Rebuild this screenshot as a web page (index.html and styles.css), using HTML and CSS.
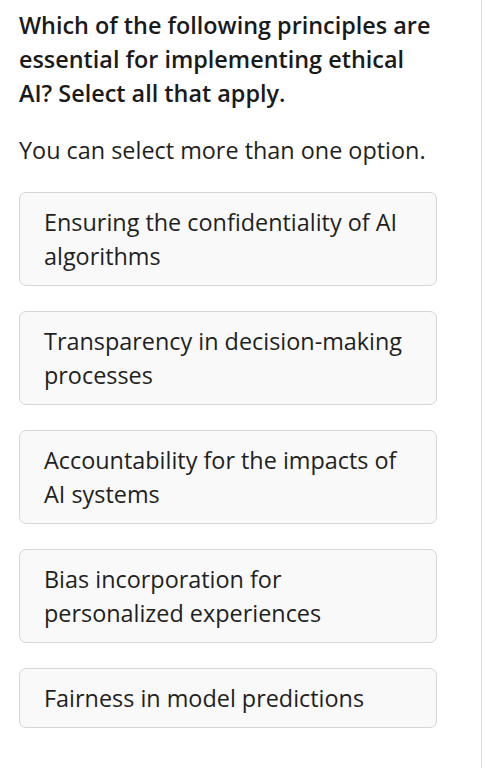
FILE: index.html
```html
<!DOCTYPE html>
<html lang="en">
<head>
    <meta charset="UTF-8">
    <meta name="viewport" content="width=device-width, initial-scale=1.0">
    <title>Ethical AI Quiz</title>
    <link rel="stylesheet" href="styles.css">
</head>
<body>
    <div class="page">
        <div class="question">
            <h1>Which of the following principles are essential for implementing ethical AI? Select all that apply.</h1>
            <p class="hint">You can select more than one option.</p>
            <div class="options">
                <div class="option">Ensuring the confidentiality of AI algorithms</div>
                <div class="option">Transparency in decision-making processes</div>
                <div class="option">Accountability for the impacts of AI systems</div>
                <div class="option">Bias incorporation for personalized experiences</div>
                <div class="option">Fairness in model predictions</div>
            </div>
        </div>
    </div>
</body>
</html>
```

FILE: styles.css
```css
body {
    font-family: "Open Sans", Arial, sans-serif;
    background-color: #fff;
    color: #1f1f1f;
    margin: 0;
    padding: 0;
}
.page {
    width: 482px;
    min-height: 100vh;
    border-right: 1px solid #dcdcdc;
    box-sizing: border-box;
}
.question {
    width: 418px;
    padding: 8px 19px 20px;
}
h1 {
    font-size: 23.4px;
    font-weight: 600;
    line-height: 34px;
    margin: 0 0 23px;
    color: #1a1a1a;
}
.hint {
    font-size: 23.4px;
    line-height: 34px;
    margin: 0 0 25px;
}
.options {
    display: flex;
    flex-direction: column;
    gap: 25px;
}
.option {
    background: #f9f9f9;
    border: 1px solid #d6d6d6;
    border-radius: 7px;
    padding: 12px 24px;
    font-size: 23.4px;
    line-height: 34px;
}
```
